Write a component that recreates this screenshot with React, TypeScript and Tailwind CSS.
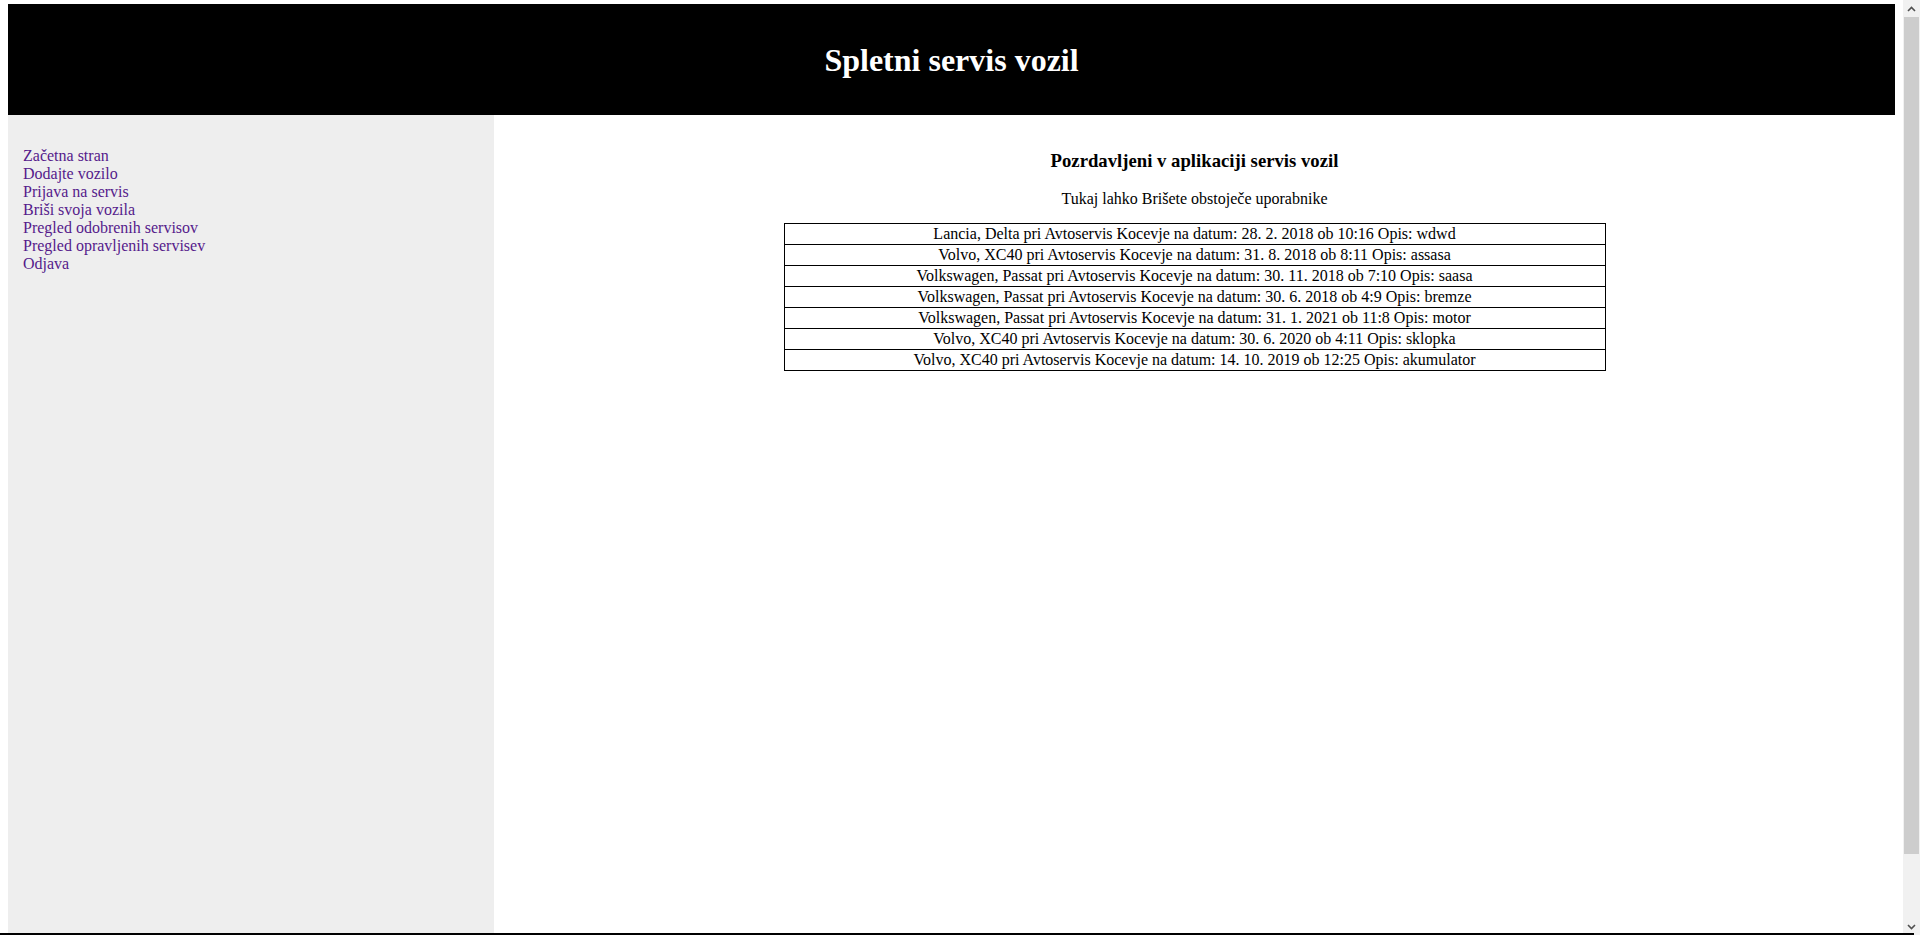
import React from "react";

const links = [
  "Začetna stran",
  "Dodajte vozilo",
  "Prijava na servis",
  "Briši svoja vozila",
  "Pregled odobrenih servisov",
  "Pregled opravljenih servisev",
  "Odjava",
];

const rows = [
  "Lancia, Delta pri Avtoservis Kocevje na datum: 28. 2. 2018 ob 10:16 Opis: wdwd",
  "Volvo, XC40 pri Avtoservis Kocevje na datum: 31. 8. 2018 ob 8:11 Opis: assasa",
  "Volkswagen, Passat pri Avtoservis Kocevje na datum: 30. 11. 2018 ob 7:10 Opis: saasa",
  "Volkswagen, Passat pri Avtoservis Kocevje na datum: 30. 6. 2018 ob 4:9 Opis: bremze",
  "Volkswagen, Passat pri Avtoservis Kocevje na datum: 31. 1. 2021 ob 11:8 Opis: motor",
  "Volvo, XC40 pri Avtoservis Kocevje na datum: 30. 6. 2020 ob 4:11 Opis: sklopka",
  "Volvo, XC40 pri Avtoservis Kocevje na datum: 14. 10. 2019 ob 12:25 Opis: akumulator",
];

function FakeScrollbar() {
  return (
    <div className="fixed top-0 right-0 w-[17px] h-[935px] bg-[#f1f1f1] flex flex-col">
      <div className="h-[17px] flex items-center justify-center">
        <svg width="9" height="6" viewBox="0 0 9 6">
          <polyline points="1,5 4.5,1.5 8,5" fill="none" stroke="#505050" strokeWidth="1.6" />
        </svg>
      </div>
      <div className="h-[837px] mx-[1px] bg-[#cdcdcd]" />
      <div className="flex-1" />
      <div className="h-[17px] flex items-center justify-center">
        <svg width="9" height="6" viewBox="0 0 9 6">
          <polyline points="1,1 4.5,4.5 8,1" fill="none" stroke="#505050" strokeWidth="1.6" />
        </svg>
      </div>
    </div>
  );
}

export default function App() {
  return (
    <div className="w-[1920px] h-[935px] overflow-hidden bg-white">
      <div className="w-[1903px] pt-1 px-2 font-['Liberation_Serif','Times_New_Roman',serif] text-black text-[16px]">
        <header className="h-[111px] bg-black flex items-center justify-center pt-[2px]">
          <h1 className="text-[32px] font-bold text-white leading-[37px]">Spletni servis vozil</h1>
        </header>
        <div className="flex">
          <nav className="w-[486px] h-[820px] bg-[#eeeeee] pt-[32px] pl-[15px] flex flex-col items-start leading-[18px]">
            {links.map((l) => (
              <a key={l} href="#" className="text-[#551a8b] no-underline">
                {l}
              </a>
            ))}
          </nav>
          <main className="flex-1 flex flex-col items-center">
            <h3 className="mt-[35px] text-[18.72px] font-bold leading-[21px]">
              Pozrdavljeni v aplikaciji servis vozil
            </h3>
            <p className="mt-[19px] leading-[18px]">Tukaj lahko Brišete obstoječe uporabnike</p>
            <table className="mt-[15px] w-[822px] border-collapse">
              <tbody>
                {rows.map((r) => (
                  <tr key={r}>
                    <td className="border border-black text-center py-[1px] px-[1px] leading-[18px]">{r}</td>
                  </tr>
                ))}
              </tbody>
            </table>
          </main>
        </div>
      </div>
      <FakeScrollbar />
      <div className="fixed bottom-0 left-0 w-[1914px] h-[2px] bg-black" />
    </div>
  );
}
